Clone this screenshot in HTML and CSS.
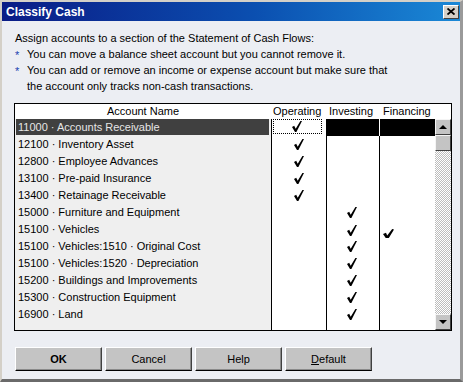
FILE: index.html
```html
<!DOCTYPE html>
<html lang="en">
<head>
  <meta charset="UTF-8" />
  <title>Classify Cash</title>
  <link rel="stylesheet" href="styles.css">
</head>
<body>

  <div class="window">
    <div class="titlebar">
      <span class="title">Classify Cash</span>
      <span class="close">
        <svg width="8" height="7" viewBox="0 0 8 7"><path d="M0.5 0.5 L7.5 6.5 M7.5 0.5 L0.5 6.5" stroke="#000" stroke-width="1.8"/></svg>
      </span>
    </div>

    <div class="content">
      <div class="intro">
        <p>Assign accounts to a section of the Statement of Cash Flows:</p>
        <p class="note"><span class="star">*</span>You can move a balance sheet account but you cannot remove it.</p>
        <p class="note"><span class="star">*</span>You can add or remove an income or expense account but make sure that<br>the account only tracks non-cash transactions.</p>
      </div>

      <div class="list">
        <div class="list-head">
          <div class="h-name">Account Name</div>
          <div class="h-op">Operating</div>
          <div class="h-inv">Investing</div>
          <div class="h-fin">Financing</div>
        </div>

        <div class="list-body">
          <div class="rows">
            <div class="row sel">
              <div class="name"><span class="label">11000 · Accounts Receivable</span></div>
              <div class="op"><span class="focus"><svg class="check" viewBox="0 0 10 11"><polygon points="0,6 2.2,4.8 3.7,7.8 8.4,0 10,0 4.4,11 3,11"/></svg></span></div>
              <div class="inv"></div>
              <div class="fin"></div>
            </div>
            <div class="row">
              <div class="name"><span class="label">12100 · Inventory Asset</span></div>
              <div class="op"><svg class="check" viewBox="0 0 10 11"><polygon points="0,6 2.2,4.8 3.7,7.8 8.4,0 10,0 4.4,11 3,11"/></svg></div>
              <div class="inv"></div>
              <div class="fin"></div>
            </div>
            <div class="row">
              <div class="name"><span class="label">12800 · Employee Advances</span></div>
              <div class="op"><svg class="check" viewBox="0 0 10 11"><polygon points="0,6 2.2,4.8 3.7,7.8 8.4,0 10,0 4.4,11 3,11"/></svg></div>
              <div class="inv"></div>
              <div class="fin"></div>
            </div>
            <div class="row">
              <div class="name"><span class="label">13100 · Pre-paid Insurance</span></div>
              <div class="op"><svg class="check" viewBox="0 0 10 11"><polygon points="0,6 2.2,4.8 3.7,7.8 8.4,0 10,0 4.4,11 3,11"/></svg></div>
              <div class="inv"></div>
              <div class="fin"></div>
            </div>
            <div class="row">
              <div class="name"><span class="label">13400 · Retainage Receivable</span></div>
              <div class="op"><svg class="check" viewBox="0 0 10 11"><polygon points="0,6 2.2,4.8 3.7,7.8 8.4,0 10,0 4.4,11 3,11"/></svg></div>
              <div class="inv"></div>
              <div class="fin"></div>
            </div>
            <div class="row">
              <div class="name"><span class="label">15000 · Furniture and Equipment</span></div>
              <div class="op"></div>
              <div class="inv"><svg class="check" viewBox="0 0 10 11"><polygon points="0,6 2.2,4.8 3.7,7.8 8.4,0 10,0 4.4,11 3,11"/></svg></div>
              <div class="fin"></div>
            </div>
            <div class="row">
              <div class="name"><span class="label">15100 · Vehicles</span></div>
              <div class="op"></div>
              <div class="inv"><svg class="check" viewBox="0 0 10 11"><polygon points="0,6 2.2,4.8 3.7,7.8 8.4,0 10,0 4.4,11 3,11"/></svg></div>
              <div class="fin"><svg class="check-bold" viewBox="0 0 11 10"><polygon points="0,5 3,3.8 4.2,6.5 9.2,0 11,0.6 5.2,10 3.4,10"/></svg></div>
            </div>
            <div class="row">
              <div class="name"><span class="label">15100 · Vehicles:1510 · Original Cost</span></div>
              <div class="op"></div>
              <div class="inv"><svg class="check" viewBox="0 0 10 11"><polygon points="0,6 2.2,4.8 3.7,7.8 8.4,0 10,0 4.4,11 3,11"/></svg></div>
              <div class="fin"></div>
            </div>
            <div class="row">
              <div class="name"><span class="label">15100 · Vehicles:1520 · Depreciation</span></div>
              <div class="op"></div>
              <div class="inv"><svg class="check" viewBox="0 0 10 11"><polygon points="0,6 2.2,4.8 3.7,7.8 8.4,0 10,0 4.4,11 3,11"/></svg></div>
              <div class="fin"></div>
            </div>
            <div class="row">
              <div class="name"><span class="label">15200 · Buildings and Improvements</span></div>
              <div class="op"></div>
              <div class="inv"><svg class="check" viewBox="0 0 10 11"><polygon points="0,6 2.2,4.8 3.7,7.8 8.4,0 10,0 4.4,11 3,11"/></svg></div>
              <div class="fin"></div>
            </div>
            <div class="row">
              <div class="name"><span class="label">15300 · Construction Equipment</span></div>
              <div class="op"></div>
              <div class="inv"><svg class="check" viewBox="0 0 10 11"><polygon points="0,6 2.2,4.8 3.7,7.8 8.4,0 10,0 4.4,11 3,11"/></svg></div>
              <div class="fin"></div>
            </div>
            <div class="row">
              <div class="name"><span class="label">16900 · Land</span></div>
              <div class="op"></div>
              <div class="inv"><svg class="check" viewBox="0 0 10 11"><polygon points="0,6 2.2,4.8 3.7,7.8 8.4,0 10,0 4.4,11 3,11"/></svg></div>
              <div class="fin"></div>
            </div>
            <div class="row filler">
              <div class="name"></div>
              <div class="op"></div>
              <div class="inv"></div>
              <div class="fin"></div>
            </div>
          </div>

          <div class="scrollbar">
            <div class="sb-btn"><span class="arrow-up"></span></div>
            <div class="sb-thumb"></div>
            <div class="sb-track"></div>
            <div class="sb-btn"><span class="arrow-down"></span></div>
          </div>
        </div>
      </div>

      <div class="buttons">
        <button class="btn btn-ok">OK</button>
        <button class="btn">Cancel</button>
        <button class="btn">Help</button>
        <button class="btn"><u>D</u>efault</button>
      </div>
    </div>
  </div>

</body>
</html>
```

FILE: styles.css
```css
body {
  margin: 0;
  font-family: 'Liberation Sans', Arial, sans-serif;
  font-size: 11px;
  color: #000;
  background-color: #eceef3;
}
.window {
  width: 463px;
  height: 382px;
  box-sizing: border-box;
  border: 2px solid #d4d0c8;
  border-right: 3px solid #9a9a9a;
  border-bottom: 3px solid #6a6a6a;
  background-color: #eceef3;
  display: flex;
  flex-direction: column;
}
.titlebar {
  height: 19px;
  flex: none;
  display: flex;
  align-items: center;
  justify-content: space-between;
  padding: 0 1px 0 4px;
  background: linear-gradient(to right, #0a1c86, #0b4fb0 55%, #1a88d6);
}
.title {
  color: #fff;
  font-weight: bold;
  font-size: 12px;
  margin-top: 1px;
}
.close {
  width: 16px;
  height: 14px;
  box-sizing: border-box;
  background-color: #d4d0c8;
  border: 1px solid;
  border-color: #fff #404040 #404040 #fff;
  display: flex;
  align-items: center;
  justify-content: center;
}
.content {
  padding: 9px 0 0 12px;
}
.intro {
  margin-left: 1px;
  margin-bottom: 9px;
}
.intro p {
  margin: 0;
  line-height: 16px;
}
.note {
  padding-left: 12px;
  position: relative;
}
.star {
  position: absolute;
  left: 0;
  top: 1px;
  color: #1a3fb0;
}

/* account list */
.list {
  width: 438px;
  height: 228px;
  box-sizing: border-box;
  border: 1px solid #000;
  display: flex;
  flex-direction: column;
}
.list-head {
  height: 15px;
  flex: none;
  display: grid;
  grid-template-columns: 256px 55px 53px 56px 16px;
  background-color: #fff;
  line-height: 15px;
}
.h-name {
  text-align: center;
}
.h-op {
  padding-left: 2px;
}
.h-inv {
  padding-left: 3px;
}
.h-fin {
  padding-left: 4px;
}
.list-body {
  flex: 1;
  display: flex;
}
.rows {
  flex: 1;
  display: flex;
  flex-direction: column;
}
.row {
  height: 17px;
  display: grid;
  grid-template-columns: 256px 55px 53px 56px;
}
.row.filler {
  flex: 1;
}
.row > div {
  display: flex;
  align-items: center;
  justify-content: center;
  background-color: #fff;
}
.row .name {
  background-color: #efefef;
  justify-content: flex-start;
  align-items: flex-start;
  padding: 0 2px 0 1px;
}
.label {
  display: block;
  flex: 1;
  height: 16px;
  line-height: 17px;
  padding-left: 2px;
  white-space: nowrap;
}
.row .op,
.row .inv,
.row .fin {
  border-left: 1px solid #000;
}
.row .inv {
  padding-right: 3px;
}
.row .fin {
  justify-content: flex-start;
  padding-left: 3px;
}
.row.sel .label {
  background-color: #404040;
  color: #e6e6e6;
}
.row.sel .inv,
.row.sel .fin {
  background-color: #000;
}
.row.sel .fin {
  border-left-color: #fff;
}
.row.sel .op {
  align-items: flex-start;
}
.focus {
  width: 49px;
  height: 15px;
  box-sizing: border-box;
  border: 1px dotted #000;
  margin-right: 4px;
  display: flex;
  align-items: center;
  justify-content: center;
}
.check {
  width: 10px;
  height: 11px;
  fill: #000;
}
.check-bold {
  width: 11px;
  height: 10px;
  fill: #000;
  margin-top: 8px;
}

/* scrollbar */
.scrollbar {
  width: 16px;
  display: flex;
  flex-direction: column;
}
.sb-btn,
.sb-thumb {
  height: 16px;
  box-sizing: border-box;
  background-color: #c4c4c4;
  border: 1px solid;
  border-color: #f4f4f4 #404040 #404040 #f4f4f4;
  display: flex;
  align-items: center;
  justify-content: center;
}
.sb-track {
  flex: 1;
  background: repeating-conic-gradient(#bdbdbd 0 25%, #fff 0 50%) 0 0 / 2px 2px;
}
.arrow-up {
  width: 0;
  height: 0;
  border-left: 4px solid transparent;
  border-right: 4px solid transparent;
  border-bottom: 4px solid #000;
}
.arrow-down {
  width: 0;
  height: 0;
  border-left: 4px solid transparent;
  border-right: 4px solid transparent;
  border-top: 4px solid #000;
}

/* buttons */
.buttons {
  display: flex;
  gap: 3px;
  margin: 16px 0 0 1px;
}
.btn {
  width: 87px;
  height: 24px;
  box-sizing: border-box;
  background-color: #c4c4c4;
  border: 1px solid;
  border-color: #fff #404040 #000 #fff;
  box-shadow: inset -1px -1px #8a8a8a;
  font-family: 'Liberation Sans', Arial, sans-serif;
  font-size: 11px;
  color: #000;
  padding: 0;
}
.btn-ok {
  font-weight: bold;
}
```
